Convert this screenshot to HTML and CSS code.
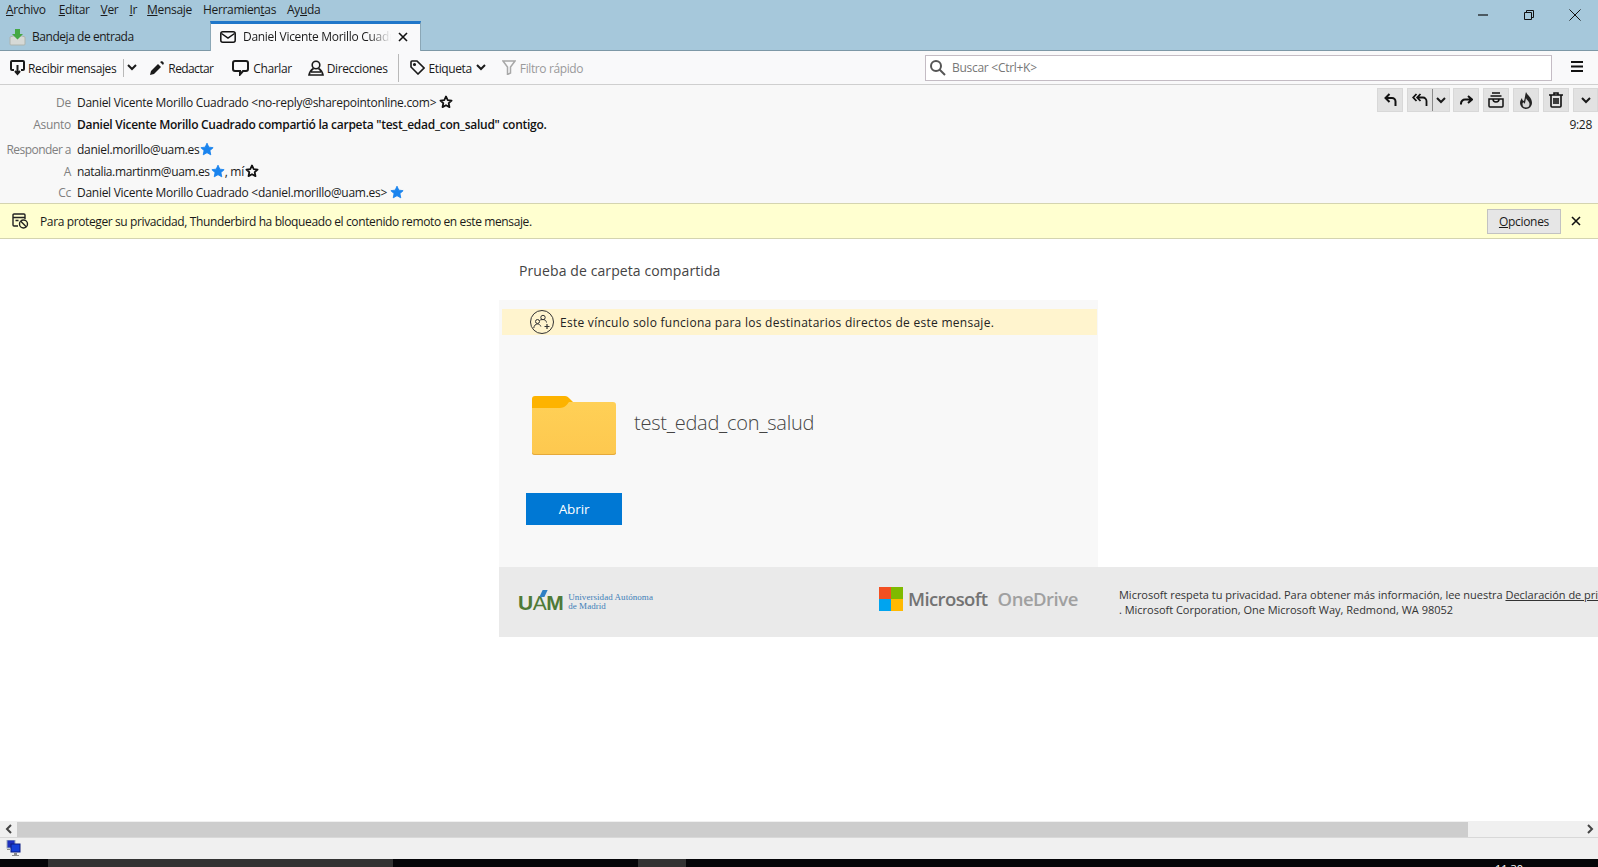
FILE: index.html
```html
<!DOCTYPE html>
<html lang="es">
<head>
    <meta charset="UTF-8">
    <title>Daniel Vicente Morillo Cuadrado compartió la carpeta</title>
    <link rel="stylesheet" href="styles.css">
</head>
<body>
    <div class="app">
        <div class="titlebar">
            <div class="menubar">
                <span class="menu-item menu-first"><u>A</u>rchivo</span>
                <span class="menu-item"><u>E</u>ditar</span>
                <span class="menu-item"><u>V</u>er</span>
                <span class="menu-item menu-ir"><u>I</u>r</span>
                <span class="menu-item"><u>M</u>ensaje</span>
                <span class="menu-item">Herramien<u>t</u>as</span>
                <span class="menu-item">Ay<u>u</u>da</span>
                <div class="window-buttons">
                    <svg width="12" height="12" viewBox="0 0 12 12"><path d="M1 6h10" stroke="#111" stroke-width="1.2"/></svg>
                    <svg width="12" height="12" viewBox="0 0 12 12" fill="none" stroke="#111"><path d="M1.5 3.5h7v7h-7zM3.5 3.5v-2h7v7h-2"/></svg>
                    <svg width="12" height="12" viewBox="0 0 12 12"><path d="M.5.5l11 11M11.5.5l-11 11" stroke="#111"/></svg>
                </div>
            </div>
            <div class="tabs">
                <div class="tab">
                    <svg width="17" height="18" viewBox="0 0 17 18"><path d="M1 9l3-1h9l3 1v7a1 1 0 0 1-1 1H2a1 1 0 0 1-1-1z" fill="#d6d9d6" stroke="#aeb4ae"/><path d="M6 1h5v5h3l-5.500 5.500L3 6h3z" fill="#45a845"/></svg>
                    <span>Bandeja de entrada</span>
                </div>
                <div class="tab tab-active">
                    <svg width="16" height="12" viewBox="0 0 16 12" fill="none" stroke="#111" stroke-width="1.500"><rect x=".8" y=".8" width="14.400" height="10.400" rx="2"/><path d="M1.500 2.500L8 7l6.500-4.500"/></svg>
                    <span class="tab-title">Daniel Vicente Morillo Cuadrado compartió</span>
                    <svg width="10" height="10" viewBox="0 0 10 10"><path d="M1 1l8 8M9 1l-8 8" stroke="#111" stroke-width="1.600"/></svg>
                </div>
            </div>
        </div>

        <div class="toolbar">
            <div class="tool tool-get">
                <svg width="15" height="16" viewBox="0 0 15 16" fill="none" stroke="#1a1a1a" stroke-width="2"><path d="M4 10H2a1 1 0 0 1-1-1V2a1 1 0 0 1 1-1h11a1 1 0 0 1 1 1v7a1 1 0 0 1-1 1h-2"/><path d="M7.500 5v8M5 11l2.500 3L10 11"/></svg>
                <span>Recibir mensajes</span>
            </div>
            <div class="tool-sep tool-sep-light"></div>
            <svg class="chev chev-get" width="10" height="7" viewBox="0 0 10 7"><path d="M1 1l4 4 4-4" fill="none" stroke="#1a1a1a" stroke-width="2"/></svg>
            <div class="tool tool-write">
                <svg width="14" height="14" viewBox="0 0 14 14"><path d="M0 14l1-4 7-7 3 3-7 7z" fill="#1a1a1a"/><path d="M10 1l2-1 2 2-1 2z" fill="#1a1a1a"/></svg>
                <span>Redactar</span>
            </div>
            <div class="tool tool-chat">
                <svg width="17" height="16" viewBox="0 0 17 16" fill="none" stroke="#1a1a1a" stroke-width="2"><path d="M3 1h11a2 2 0 0 1 2 2v6a2 2 0 0 1-2 2h-3l-3 3.500V11H3a2 2 0 0 1-2-2V3a2 2 0 0 1 2-2z"/></svg>
                <span>Charlar</span>
            </div>
            <div class="tool tool-book">
                <svg width="16" height="16" viewBox="0 0 16 16" fill="none" stroke="#1a1a1a" stroke-width="1.600"><circle cx="8" cy="5" r="3.800"/><path d="M5.500 8.500C3 10 1.500 12 1 15h14c-.5-3-2-5-4.500-6.500M3 12h10"/></svg>
                <span>Direcciones</span>
            </div>
            <div class="tool-sep"></div>
            <div class="tool tool-tag">
                <svg width="15" height="15" viewBox="0 0 15 15" fill="none" stroke="#1a1a1a" stroke-width="1.600"><path d="M1 2a1 1 0 0 1 1-1h5l7 7-6 6-7-7z"/><circle cx="4.500" cy="4.500" r=".8"/></svg>
                <span>Etiqueta</span>
                <svg class="chev" width="10" height="7" viewBox="0 0 10 7"><path d="M1 1l4 4 4-4" fill="none" stroke="#1a1a1a" stroke-width="2"/></svg>
            </div>
            <div class="tool tool-filter">
                <svg width="14" height="15" viewBox="0 0 14 15" fill="none" stroke="#a8a8a8" stroke-width="1.500"><path d="M1 1h12L8.500 7v6l-3 1.500V7z"/></svg>
                <span>Filtro rápido</span>
            </div>
            <div class="search">
                <svg width="17" height="17" viewBox="0 0 17 17" fill="none" stroke="#555" stroke-width="2"><circle cx="7" cy="7" r="5"/><path d="M10.500 10.500L16 16"/></svg>
                <span>Buscar &lt;Ctrl+K&gt;</span>
            </div>
            <svg class="hamburger" width="12" height="11" viewBox="0 0 12 11"><path d="M0 1h12M0 5.500h12M0 10h12" stroke="#111" stroke-width="2"/></svg>
        </div>

        <div class="msg-header">
            <div class="msg-fields">
                <div class="field">
                    <span class="field-label">De</span>
                    <span class="field-value">Daniel Vicente Morillo Cuadrado &lt;no-reply@sharepointonline.com&gt;</span>
                    <svg class="star star-gap" width="14" height="14" viewBox="0 0 24 24" fill="none" stroke="#111" stroke-width="3" stroke-linejoin="round"><path d="M12 2.500l2.900 6.200 6.700.8-5 4.600 1.400 6.700-6-3.400-6 3.400 1.400-6.700-5-4.600 6.700-.8z"/></svg>
                </div>
                <div class="field">
                    <span class="field-label">Asunto</span>
                    <span class="field-value field-subject">Daniel Vicente Morillo Cuadrado compartió la carpeta "test_edad_con_salud" contigo.</span>
                </div>
                <div class="field field-gap">
                    <span class="field-label field-label-long">Responder a</span>
                    <span class="field-value">daniel.morillo@uam.es</span>
                    <svg class="star" width="14" height="14" viewBox="0 0 24 24" fill="#1a84ee" stroke="#1a84ee" stroke-width="1.500" stroke-linejoin="round"><path d="M12 2l3.100 6.800 7.400.9-5.500 5 1.500 7.300-6.500-3.700L5.500 22 7 14.700l-5.500-5 7.400-.9z"/></svg>
                </div>
                <div class="field">
                    <span class="field-label">A</span>
                    <span class="field-value field-tight">natalia.martinm@uam.es</span>
                    <svg class="star" width="14" height="14" viewBox="0 0 24 24" fill="#1a84ee" stroke="#1a84ee" stroke-width="1.500" stroke-linejoin="round"><path d="M12 2l3.100 6.800 7.400.9-5.500 5 1.500 7.300-6.500-3.700L5.500 22 7 14.700l-5.500-5 7.400-.9z"/></svg>
                    <span class="field-value">, mí</span>
                    <svg class="star" width="14" height="14" viewBox="0 0 24 24" fill="none" stroke="#111" stroke-width="3" stroke-linejoin="round"><path d="M12 2.500l2.900 6.200 6.700.8-5 4.600 1.400 6.700-6-3.400-6 3.400 1.400-6.700-5-4.600 6.700-.8z"/></svg>
                </div>
                <div class="field field-last">
                    <span class="field-label">Cc</span>
                    <span class="field-value">Daniel Vicente Morillo Cuadrado &lt;daniel.morillo@uam.es&gt;</span>
                    <svg class="star star-gap" width="14" height="14" viewBox="0 0 24 24" fill="#1a84ee" stroke="#1a84ee" stroke-width="1.500" stroke-linejoin="round"><path d="M12 2l3.100 6.800 7.400.9-5.500 5 1.500 7.300-6.500-3.700L5.500 22 7 14.700l-5.500-5 7.400-.9z"/></svg>
                </div>
            </div>
            <div class="msg-side">
                <div class="msg-actions">
                    <div class="action">
                        <svg width="13" height="14" viewBox="0 0 13 14" fill="none" stroke="#111" stroke-width="2"><path d="M5.500 1L1.500 5l4 4M2 5h6a3.500 3.500 0 0 1 3.500 3.500V13"/></svg>
                    </div>
                    <div class="action action-split">
                        <span class="action-part">
                            <svg width="16" height="14" viewBox="0 0 16 14" fill="none" stroke="#111" stroke-width="1.800"><path d="M4.500 1L1.200 4.500 4.500 8M8.500 1L5.200 4.500 8.500 8M6 4.500h5a3.500 3.500 0 0 1 3.500 3.500v5"/></svg>
                        </span>
                        <span class="action-part action-part-more">
                            <svg width="10" height="7" viewBox="0 0 10 7"><path d="M1 1l4 4 4-4" fill="none" stroke="#1a1a1a" stroke-width="2"/></svg>
                        </span>
                    </div>
                    <div class="action">
                        <svg width="13" height="10" viewBox="0 0 13 10" fill="none" stroke="#111" stroke-width="2"><path d="M8 1l4 3.500L8 8M12 4.500H5A4 4 0 0 0 1 8.500v1"/></svg>
                    </div>
                    <div class="action">
                        <svg width="16" height="16" viewBox="0 0 16 16" fill="none" stroke="#111" stroke-width="1.500"><path d="M4 1h8M2.500 4h11"/><path d="M1 7h14v7a1 1 0 0 1-1 1H2a1 1 0 0 1-1-1zM5 7a3 3 0 0 0 6 0"/></svg>
                    </div>
                    <div class="action">
                        <svg width="14" height="17" viewBox="0 0 14 17"><path d="M7 0c1 3 6 5 6 11a6 6 0 0 1-12 0c0-2 1-4 2-5 0 2 1 3 2 3 1-3 1-6 2-9z" fill="#222"/><path d="M7 6c.5 2 3.500 3.500 3.500 6a3.500 3.500 0 0 1-7 0c0-1 .5-1.500 1-2 .2 1 .8 1.500 1.300 1.500C6.500 10 6.500 8 7 6z" fill="#d8d8d8"/></svg>
                    </div>
                    <div class="action">
                        <svg width="14" height="16" viewBox="0 0 14 16" fill="none" stroke="#111" stroke-width="1.600"><path d="M0 3h14M5 3V1h4v2M2 3v11a1 1 0 0 0 1 1h8a1 1 0 0 0 1-1V3M5 6v6M7 6v6M9 6v6"/></svg>
                    </div>
                    <div class="action action-last">
                        <svg width="10" height="7" viewBox="0 0 10 7"><path d="M1 1l4 4 4-4" fill="none" stroke="#1a1a1a" stroke-width="2"/></svg>
                    </div>
                </div>
                <div class="msg-time">9:28</div>
            </div>
        </div>

        <div class="notice">
            <svg width="17" height="16" viewBox="0 0 17 16" fill="none" stroke="#222" stroke-width="1.400"><path d="M6 13H2a1 1 0 0 1-1-1V2a1 1 0 0 1 1-1h10a1 1 0 0 1 1 1v4M1 4.500h12M3.500 7.500h3"/><circle cx="11.500" cy="11" r="4"/><path d="M8.800 8.300l5.400 5.400"/></svg>
            <span class="notice-text">Para proteger su privacidad, Thunderbird ha bloqueado el contenido remoto en este mensaje.</span>
            <div class="notice-btn"><u>O</u>pciones</div>
            <svg class="notice-close" width="10" height="10" viewBox="0 0 10 10"><path d="M1 1l8 8M9 1l-8 8" stroke="#111" stroke-width="1.600"/></svg>
        </div>

        <div class="content">
            <div class="mail">
                <p class="mail-intro">Prueba de carpeta compartida</p>
                <div class="card">
                    <div class="banner">
                        <svg width="24" height="24" viewBox="0 0 24 24" fill="none" stroke="#333" stroke-width="1"><circle cx="12" cy="12" r="11.500"/><circle cx="13" cy="7.500" r="2.200"/><circle cx="7.500" cy="11.500" r="2"/><path d="M9.500 10.500c.8-1 4-1.300 5.500-.5 1 .6 1.300 1.500 1.500 2.500M3.800 18c.2-2.500 1.800-4 3.700-4 1.500 0 2.800.8 3.300 2.500"/><path d="M17 14v5M14.500 16.500h5" stroke-width="1.200"/></svg>
                        <span>Este vínculo solo funciona para los destinatarios directos de este mensaje.</span>
                    </div>
                    <div class="item">
                        <svg width="84" height="59" viewBox="0 0 84 59">
                            <defs>
                                <linearGradient id="folderFill" x1="0" y1="0" x2="0" y2="1">
                                    <stop offset="0" stop-color="#ffd056"/>
                                    <stop offset="1" stop-color="#fdc84f"/>
                                </linearGradient>
                            </defs>
                            <path d="M3 0h30c2 0 3 1 5 3l3 3v10H0V3a3 3 0 0 1 3-3z" fill="#fdb300"/>
                            <path d="M0 12h28c4 0 7-3 9-6h44a3 3 0 0 1 3 3v47a3 3 0 0 1-3 3H3a3 3 0 0 1-3-3z" fill="url(#folderFill)"/>
                            <path d="M0 56v1c0 1 1 2 3 2h78c2 0 3-1 3-2v-1a3 3 0 0 1-3 2H3a3 3 0 0 1-3-2z" fill="#e5a93a"/>
                        </svg>
                        <span class="item-name">test_edad_con_salud</span>
                    </div>
                    <div class="open-btn">Abrir</div>
                </div>
                <div class="mail-footer">
                    <div class="uam">
                        <span class="uam-mark">U<span class="uam-a">A</span>M</span>
                        <span class="uam-name">Universidad Autónoma<br>de Madrid</span>
                    </div>
                    <div class="ms">
                        <span class="ms-logo">
                            <i class="ms-red"></i><i class="ms-green"></i><i class="ms-blue"></i><i class="ms-yellow"></i>
                        </span>
                        <span class="ms-name">Microsoft</span>
                        <span class="ms-product">OneDrive</span>
                    </div>
                    <div class="legal">
                        Microsoft respeta tu privacidad. Para obtener más información, lee nuestra <u>Declaración de privacidad</u><br>
                        . Microsoft Corporation, One Microsoft Way, Redmond, WA 98052
                    </div>
                </div>
            </div>
        </div>

        <div class="hscroll">
            <svg width="7" height="10" viewBox="0 0 7 10"><path d="M6 1L2 5l4 4" fill="none" stroke="#444" stroke-width="2"/></svg>
            <div class="hscroll-track"><div class="hscroll-thumb"></div></div>
            <svg width="7" height="10" viewBox="0 0 7 10"><path d="M1 1l4 4-4 4" fill="none" stroke="#444" stroke-width="2"/></svg>
        </div>

        <div class="statusbar">
            <svg width="15" height="17" viewBox="0 0 15 17"><rect x="1" y="0" width="8" height="8" fill="#1c2fbe" stroke="#9ab"/><rect x="5" y="4" width="9" height="8" fill="#1540d8" stroke="#0a1a80"/><path d="M8 13h3v2H8zM6 15h7v1H6zM1 9h3v1H1z" fill="#8a8a8a"/></svg>
        </div>

        <div class="taskbar">
            <div class="task task-main"></div>
            <div class="task task-small"></div>
            <span class="clock">11:30</span>
        </div>
    </div>
</body>
</html>
```

FILE: styles.css
```css
html, body {
    margin: 0;
    height: 100%;
    overflow: hidden;
}

body {
    font-family: 'Open Sans', 'Noto Sans', sans-serif;
    font-size: 12px;
    color: #1a1a1a;
    background-color: #ffffff;
}

.app {
    display: flex;
    flex-direction: column;
    height: 867px;
}

/* title bar */

.titlebar {
    height: 50px;
    flex-shrink: 0;
    background-color: #a6c8db;
    border-bottom: 1px solid #7d98a6;
}

.menubar {
    display: flex;
    height: 19px;
    padding-bottom: 2px;
    align-items: center;
    padding-left: 6px;
    gap: 11px;
    letter-spacing: -0.32px;
}

.menu-first {
    margin-right: 2px;
}

.menu-ir {
    margin-right: -1px;
}

.window-buttons {
    display: flex;
    align-items: center;
    gap: 34px;
    margin-left: auto;
    padding-right: 17px;
    padding-top: 11px;
}

.tabs {
    display: flex;
    height: 29px;
}

.tab {
    display: flex;
    align-items: center;
    width: 210px;
    box-sizing: border-box;
    padding: 2px 0 0 9px;
    gap: 6px;
    letter-spacing: -0.45px;
}

.tab-active {
    width: 211px;
    height: 30px;
    padding: 0 12px 2px 9px;
    gap: 7px;
    background-color: #f9f9fa;
    border-top: 3px solid #1f76c9;
    border-left: 1px solid #8ba7b6;
    border-right: 1px solid #8ba7b6;
    letter-spacing: -0.3px;
}

.tab-title {
    flex: 1;
    overflow: hidden;
    white-space: nowrap;
    -webkit-mask-image: linear-gradient(to right, #000 85%, transparent);
    mask-image: linear-gradient(to right, #000 85%, transparent);
}

/* main toolbar */

.toolbar {
    display: flex;
    align-items: center;
    height: 34px;
    flex-shrink: 0;
    background-color: #f9f9fa;
    border-bottom: 1px solid #cfcfcf;
    padding: 2px 0 0 10px;
    box-sizing: border-box;
    letter-spacing: -0.38px;
}

.toolbar > svg,
.tool > svg,
.tool-sep {
    position: relative;
    top: -1px;
}

.tool {
    display: flex;
    align-items: center;
    gap: 4px;
    white-space: nowrap;
}

.tool-get,
.tool-book,
.tool-tag {
    gap: 3px;
}

.tool-sep {
    width: 1px;
    height: 28px;
    margin-left: 11px;
    background-color: #b9b9b9;
}

.tool-sep-light {
    height: 18px;
    margin-left: 7px;
}

.chev-get {
    margin-left: 3px;
}

.tool-write {
    margin-left: 13px;
    letter-spacing: -0.6px;
}

.tool-chat {
    margin-left: 19px;
}

.tool-book {
    margin-left: 16px;
}

.tool-tag {
    margin-left: 11px;
}

.tool-tag .chev {
    margin-left: 1px;
}

.tool-filter {
    margin-left: 16px;
    color: #9a9a9a;
}

.search {
    display: flex;
    align-items: center;
    gap: 6px;
    width: 627px;
    height: 26px;
    box-sizing: border-box;
    margin: -2px 0 0 auto;
    padding-left: 3px;
    background-color: #ffffff;
    border: 1px solid #c4bcc4;
    color: #777777;
    letter-spacing: -0.28px;
}

.hamburger {
    margin: -2px 15px 0 19px;
}

/* message header */

.msg-header {
    display: flex;
    height: 118px;
    flex-shrink: 0;
    box-sizing: border-box;
    background-color: #f8f8f8;
    padding-top: 6px;
}

.msg-fields {
    flex: 1;
}

.field {
    display: flex;
    align-items: center;
    height: 22px;
    letter-spacing: -0.28px;
}

.field-gap {
    margin-top: 3px;
}

.field-last {
    margin-top: -1px;
}

.field-label {
    width: 71px;
    margin-right: 6px;
    text-align: right;
    color: #808080;
    white-space: nowrap;
}

.field-label-long {
    letter-spacing: -0.55px;
}

.field-subject {
    font-weight: 600;
    color: #111111;
    letter-spacing: -0.27px;
}

.field-tight {
    letter-spacing: -0.37px;
}

.star {
    margin-left: 1px;
}

.star-gap {
    margin-left: 3px;
}

.msg-side {
    display: flex;
    flex-direction: column;
    align-items: flex-end;
}

.msg-actions {
    display: flex;
    margin-top: -3px;
    gap: 4px;
}

.action {
    display: flex;
    align-items: center;
    justify-content: center;
    width: 26px;
    height: 24px;
    box-sizing: border-box;
    background-color: #e2e2e2;
    border: 1px solid #d8d8d8;
}

.action-split {
    width: 43px;
    margin-right: -1px;
}

.action-part {
    display: flex;
    align-items: center;
    justify-content: center;
    width: 25px;
    height: 22px;
}

.action-part-more {
    width: 16px;
    border-left: 1px solid #8a8a8a;
}

.action-last {
    width: 25px;
}

.msg-time {
    margin: 4px 6px 0 0;
    letter-spacing: -0.3px;
}

/* remote content notice */

.notice {
    display: flex;
    align-items: center;
    height: 36px;
    flex-shrink: 0;
    box-sizing: border-box;
    padding-left: 12px;
    background-color: #ffffd0;
    border-top: 1px solid #d4d4b0;
    border-bottom: 1px solid #d4d4b0;
}

.notice-text {
    margin-left: 11px;
    letter-spacing: -0.38px;
}

.notice-btn {
    display: flex;
    align-items: center;
    justify-content: center;
    width: 74px;
    height: 25px;
    box-sizing: border-box;
    margin-left: auto;
    background-color: #e6e6e6;
    border: 1px solid #c2c2c2;
    letter-spacing: -0.3px;
}

.notice-close {
    margin: 0 17px 0 10px;
}

/* message body */

.content {
    flex: 1;
    overflow: hidden;
}

.mail {
    width: 1400px;
    margin-left: 499px;
}

.mail-intro {
    margin: 0;
    padding: 22px 0 0 20px;
    height: 39px;
    font-size: 14px;
    line-height: 19px;
    color: #444444;
    letter-spacing: 0.1px;
}

.card {
    width: 599px;
    height: 267px;
    box-sizing: border-box;
    padding-top: 9px;
    background-color: #f8f8f8;
}

.banner {
    display: flex;
    align-items: center;
    width: 595px;
    height: 26px;
    margin-left: 3px;
    padding-left: 28px;
    box-sizing: border-box;
    gap: 6px;
    background-color: #fff4ce;
    font-size: 12px;
    letter-spacing: 0.27px;
    color: #222222;
}

.item {
    display: flex;
    align-items: center;
    gap: 18px;
    margin: 61px 0 0 33px;
}

.item-name {
    margin-top: -6px;
    font-size: 20px;
    font-weight: 300;
    color: #444444;
    letter-spacing: -0.25px;
}

.open-btn {
    display: flex;
    align-items: center;
    justify-content: center;
    width: 96px;
    height: 32px;
    margin: 38px 0 0 27px;
    background-color: #0078d4;
    color: #ffffff;
    font-size: 13.5px;
    letter-spacing: -0.1px;
}

.mail-footer {
    display: flex;
    align-items: center;
    height: 70px;
    background-color: #eaeaea;
}

.uam {
    display: flex;
    align-items: center;
    gap: 5px;
    width: 360px;
    padding-left: 19px;
    box-sizing: border-box;
    margin-top: -5px;
}

.uam-mark {
    font-family: 'Liberation Sans', sans-serif;
    font-size: 21px;
    font-weight: 700;
    line-height: 24px;
    color: #4f7a38;
    letter-spacing: -0.5px;
    padding-top: 6px;
}

.uam-a {
    position: relative;
    font-weight: 400;
}

/* blue accent over the A of the logo */
.uam-a::before {
    content: "";
    position: absolute;
    left: 8px;
    top: -1px;
    width: 5px;
    height: 7px;
    background-color: #2f7fc4;
    transform: skewX(-25deg);
}

.uam-name {
    font-family: 'Liberation Serif', serif;
    font-size: 9px;
    line-height: 9px;
    color: #3f7fb8;
    padding-top: 4px;
    letter-spacing: 0.05px;
}

.ms {
    display: flex;
    align-items: center;
    width: 241px;
    margin: -7px 0 0 19px;
    padding-left: 1px;
    box-sizing: border-box;
}

.ms-logo {
    display: grid;
    grid-template-columns: 12px 12px;
    grid-template-rows: 12px 12px;
}

.ms-logo i {
    display: block;
}

.ms-red { background-color: #f25022; }
.ms-green { background-color: #7fba00; }
.ms-blue { background-color: #00a4ef; }
.ms-yellow { background-color: #ffb900; }

.ms-name {
    margin-left: 5px;
    font-size: 18.5px;
    font-weight: 600;
    color: #737373;
    letter-spacing: -0.6px;
}

.ms-product {
    margin-left: 10px;
    font-size: 18.5px;
    font-weight: 600;
    color: #a0a0a0;
    letter-spacing: -0.5px;
}

.legal {
    width: 700px;
    font-size: 11px;
    line-height: 15px;
    color: #333333;
    white-space: nowrap;
    letter-spacing: -0.02px;
}

/* bottom bars */

.hscroll {
    display: flex;
    align-items: center;
    height: 16px;
    flex-shrink: 0;
    padding: 0 4px 0 5px;
    gap: 5px;
    background-color: #f0f0f0;
}

.hscroll-track {
    flex: 1;
    height: 15px;
}

.hscroll-thumb {
    width: 1451px;
    height: 100%;
    background-color: #cdcdcd;
}

.statusbar {
    display: flex;
    align-items: center;
    height: 22px;
    flex-shrink: 0;
    box-sizing: border-box;
    padding-left: 6px;
    background-color: #f0f0f0;
    border-top: 1px solid #d8d8d8;
}

.taskbar {
    display: flex;
    height: 8px;
    flex-shrink: 0;
    overflow: hidden;
    background-color: #050508;
}

.task {
    height: 100%;
}

.task-main {
    width: 345px;
    margin-left: 48px;
    background-color: #333333;
}

.task-small {
    width: 48px;
    margin-left: 245px;
    background-color: #333333;
}

.clock {
    margin-left: auto;
    margin-right: 75px;
    font-size: 11px;
    line-height: 19px;
    color: #ffffff;
}
```
